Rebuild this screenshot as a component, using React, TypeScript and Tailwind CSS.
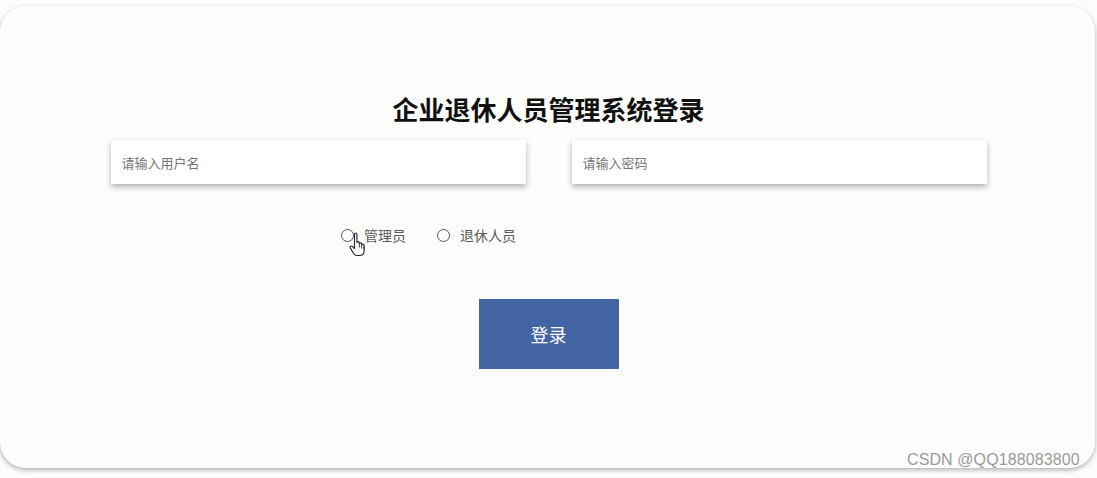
import React from "react";

const font = { fontFamily: '"Noto Sans CJK SC", "Noto Sans", sans-serif' };

function HandCursor() {
  return (
    <svg width="19" height="25" viewBox="0 0 19 25" className="absolute left-[349px] top-[232px]">
      <path
        d="M5.5 2c0-1.4 2.4-1.4 2.4 0v8.6c0-1.3 2.4-1.3 2.4 0v1.2c0-1.3 2.4-1.3 2.4 0v1.2c0-1.3 2.4-1.3 2.4 0v5.6c0 2.8-1.5 4.9-4.2 4.9H8c-1.7 0-2.8-1-3.6-2.3L1.3 15.9c-.8-1.3.9-2.5 2-1.5l2.2 2.1V2z"
        fill="#fff"
        stroke="#222"
        strokeWidth="1.1"
        strokeLinejoin="round"
      />
      <path d="M10.3 12v3.5M12.7 13v3.5M15.1 14.2v3" stroke="#222" strokeWidth="0.9" />
    </svg>
  );
}

function Radio({ label }: { label: string }) {
  return (
    <label className="flex items-center gap-[10px] text-[14px] text-[#5a5a5a]">
      <span className="block h-[13px] w-[13px] rounded-full border border-[#555] bg-white" />
      <span>{label}</span>
    </label>
  );
}

export default function App() {
  return (
    <div className="relative h-[478px] w-[1097px] overflow-hidden bg-[#fcfcfa]" style={font}>
      <div className="mt-[6px] h-[462px] w-[1095px] rounded-[26px] bg-[#fdfdfb] shadow-[0_2px_5px_rgba(0,0,0,0.3)]">
        <div className="flex flex-col items-center pt-[86px]">
          <h1 className="ml-[2px] text-[26px] font-bold leading-[34px] text-[#111]">企业退休人员管理系统登录</h1>
          <div className="mt-[14px] ml-[2px] flex gap-[46px]">
            <input
              className="h-[44px] w-[415px] bg-white px-[11px] text-[13px] text-[#333] shadow-[0_3px_6px_rgba(0,0,0,0.3)] outline-none placeholder:text-[#757575]"
              placeholder="请输入用户名"
            />
            <input
              type="password"
              className="h-[44px] w-[415px] bg-white px-[11px] text-[13px] text-[#333] shadow-[0_3px_6px_rgba(0,0,0,0.3)] outline-none placeholder:text-[#757575]"
              placeholder="请输入密码"
            />
          </div>
          <div className="mt-[41px] ml-[341px] flex gap-[31px] self-start">
            <Radio label="管理员" />
            <Radio label="退休人员" />
          </div>
          <button className="ml-[2px] mt-[53px] h-[70px] w-[140px] bg-[#4364a3] text-[18px] text-white">登录</button>
        </div>
      </div>
      <HandCursor />
      <div
        className="absolute left-[907px] top-[448px] text-[16px] tracking-[0.1px] text-[#9a9a9a]"
        style={{ fontFamily: '"Liberation Sans", Arial, sans-serif', textShadow: "0 0 2px #fff, 0 0 1px #fff" }}
      >
        CSDN @QQ188083800
      </div>
    </div>
  );
}
